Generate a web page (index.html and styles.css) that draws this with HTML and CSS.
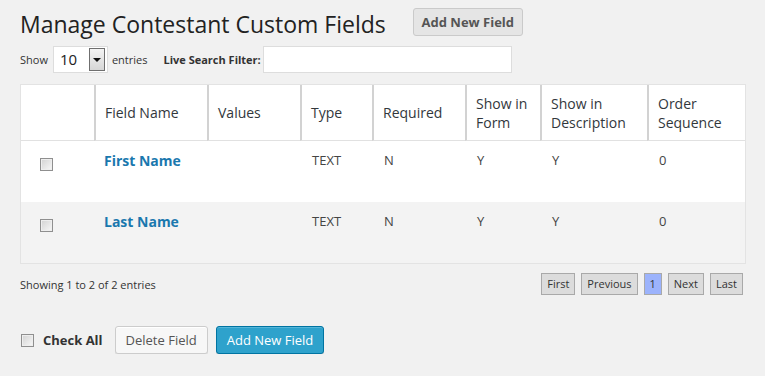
FILE: index.html
```html
<!DOCTYPE html>
<html>
<head>
<meta charset="utf-8">
<link rel="stylesheet" href="styles.css">
</head>
<body>
<div class="wrap">
  <div class="head">
    <h2 class="title">Manage Contestant Custom Fields</h2>
    <button class="btn-top">Add New Field</button>
  </div>
  <div class="controls">
    <span class="lbl">Show</span>
    <span class="select"><span class="sel-val">10</span><span class="sel-arrow"></span></span>
    <span class="lbl entries">entries</span>
    <span class="lbl search-lbl">Live Search Filter:</span>
    <span class="search-input"></span>
  </div>
  <table class="grid">
    <thead>
      <tr>
        <th class="c1"></th>
        <th class="c2">Field Name</th>
        <th class="c3">Values</th>
        <th class="c4">Type</th>
        <th class="c5">Required</th>
        <th class="c6">Show in Form</th>
        <th class="c7">Show in Description</th>
        <th class="c8">Order Sequence</th>
      </tr>
    </thead>
    <tbody>
      <tr class="r1">
        <td class="cb-cell"><span class="cb"></span></td>
        <td><a class="name">First Name</a></td>
        <td></td>
        <td>TEXT</td>
        <td>N</td>
        <td>Y</td>
        <td>Y</td>
        <td>0</td>
      </tr>
      <tr class="r2">
        <td class="cb-cell"><span class="cb"></span></td>
        <td><a class="name">Last Name</a></td>
        <td></td>
        <td>TEXT</td>
        <td>N</td>
        <td>Y</td>
        <td>Y</td>
        <td>0</td>
      </tr>
    </tbody>
  </table>
  <div class="info-row">
    <div class="info">Showing 1 to 2 of 2 entries</div>
    <div class="paging">
      <span class="pg">First</span>
      <span class="pg">Previous</span>
      <span class="pg cur">1</span>
      <span class="pg">Next</span>
      <span class="pg">Last</span>
    </div>
  </div>
  <div class="actions">
    <span class="cb cb-all"></span>
    <span class="check-all">Check All</span>
    <button class="btn btn-sec">Delete Field</button>
    <button class="btn btn-pri">Add New Field</button>
  </div>
</div>
</body>
</html>
```
FILE: styles.css
```css
html, body {
  margin: 0;
  padding: 0;
  background: #f1f1f1;
  font-family: "Open Sans", "Liberation Sans", sans-serif;
  color: #333;
}
.wrap {
  width: 726px;
  padding-left: 20px;
}
.head {
  display: flex;
  align-items: flex-start;
  height: 39px;
}
.title {
  margin: 10px 0 0 0;
  font-size: 23px;
  line-height: 29px;
  font-weight: 400;
  color: #222;
}
.btn-top {
  margin: 8px 0 0 27px;
  width: 110px;
  height: 28px;
  padding: 0;
  border: 1px solid #cacaca;
  border-radius: 3px;
  background: #e5e5e5;
  font-family: inherit;
  font-size: 13px;
  font-weight: 700;
  color: #555;
}
.controls {
  display: flex;
  align-items: center;
  height: 28px;
  margin-top: 6px;
}
.lbl {
  font-size: 11px;
  color: #333;
}
.select {
  display: flex;
  align-items: center;
  box-sizing: border-box;
  width: 55px;
  height: 27px;
  margin-left: 5px;
  background: #fff;
  border: 1px solid #ddd;
}
.sel-val {
  font-size: 15px;
  color: #222;
  margin-left: 6px;
  width: 29px;
}
.sel-arrow {
  position: relative;
  box-sizing: border-box;
  width: 16px;
  height: 23px;
  border: 1px solid #6f6f6f;
  background: linear-gradient(#f4f4f4, #d6d6d6);
}
.sel-arrow::after {
  content: "";
  position: absolute;
  left: 3px;
  top: 9px;
  border-left: 4px solid transparent;
  border-right: 4px solid transparent;
  border-top: 4px solid #111;
}
.entries {
  margin-left: 4px;
}
.search-lbl {
  margin-left: 16px;
  font-weight: 700;
}
.search-input {
  box-sizing: border-box;
  width: 249px;
  height: 27px;
  margin-left: 2px;
  background: #fff;
  border: 1px solid #ddd;
}
.grid {
  margin-top: 11px;
  width: 726px;
  table-layout: fixed;
  border-collapse: separate;
  border-spacing: 0;
  border: 1px solid #e3e3e3;
  background: #fff;
}
.grid th {
  box-sizing: border-box;
  height: 56px;
  padding: 0 8px 0 9px;
  border-left: 2px solid #d2d2d2;
  border-bottom: 1px solid #e1e1e1;
  font-size: 14px;
  font-weight: 400;
  line-height: 19px;
  color: #32373c;
  text-align: left;
  vertical-align: middle;
}
.grid th.c1 { border-left: none; width: 73px; }
.grid th.c2 { width: 113px; }
.grid th.c3 { width: 93px; }
.grid th.c4 { width: 72px; }
.grid th.c5 { width: 93px; }
.grid th.c6 { width: 75px; }
.grid th.c7 { width: 107px; }
.grid th.c8 { width: 98px; }
.grid td {
  box-sizing: border-box;
  height: 61px;
  padding: 10px 0 0 12px;
  vertical-align: top;
  font-size: 13px;
  line-height: 19px;
  color: #444;
}
.grid .r2 td {
  background: #f3f3f3;
}
.grid td.cb-cell {
  padding: 17px 0 0 19px;
}
.cb {
  display: block;
  box-sizing: border-box;
  width: 13px;
  height: 13px;
  border: 1px solid #8f8f8f;
  background: linear-gradient(135deg, #d2d2d2, #f8f8f8);
  box-shadow: inset 0 0 0 1px #eeeeee;
}
.grid td .name {
  margin-left: -2px;
  font-size: 14px;
  font-weight: 700;
  color: #1a78ae;
}
.info-row {
  display: flex;
  align-items: center;
  justify-content: space-between;
  margin-top: 9px;
  height: 22px;
}
.info {
  font-size: 11px;
  color: #333;
}
.paging {
  display: flex;
  gap: 6px;
  padding-right: 3px;
}
.pg {
  padding: 3px 5px;
  border: 1px solid #a9a9a9;
  background: #dcdcdc;
  font-size: 11px;
  line-height: 14px;
  color: #333;
}
.pg.cur {
  background: #9cb3fc;
}
.actions {
  display: flex;
  align-items: center;
  margin-top: 31px;
  height: 28px;
}
.cb-all {
  margin-left: 1px;
}
.check-all {
  margin-left: 9px;
  font-size: 13px;
  font-weight: 700;
  color: #333;
}
.btn {
  box-sizing: border-box;
  height: 28px;
  padding: 0 10px;
  border-radius: 3px;
  font-family: inherit;
  font-size: 13px;
}
.btn-sec {
  margin-left: 12px;
  background: #f7f7f7;
  border: 1px solid #ccc;
  color: #555;
  box-shadow: inset 0 1px 0 #fff, 0 1px 0 rgba(0,0,0,.08);
}
.btn-pri {
  margin-left: 8px;
  background: #2ea2cc;
  border: 1px solid #0074a2;
  color: #fff;
  box-shadow: inset 0 1px 0 rgba(120,200,230,.5), 0 1px 0 rgba(0,0,0,.15);
}
```
